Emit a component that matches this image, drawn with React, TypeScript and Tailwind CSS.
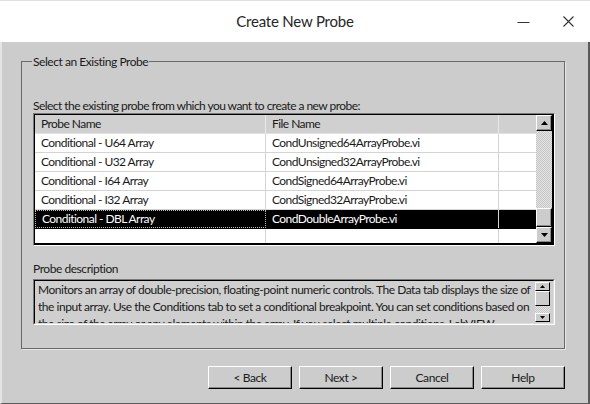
import React from "react";

const font = { fontFamily: "Lato, 'Noto Sans', sans-serif" };

function UpArrow({ small = false }: { small?: boolean }) {
  return small ? (
    <svg width="5" height="3" viewBox="0 0 5 3"><path d="M2.5 0 L5 3 L0 3 Z" fill="#000" /></svg>
  ) : (
    <svg width="7" height="4" viewBox="0 0 7 4"><path d="M3.5 0 L7 4 L0 4 Z" fill="#000" /></svg>
  );
}
function DownArrow({ small = false }: { small?: boolean }) {
  return small ? (
    <svg width="5" height="3" viewBox="0 0 5 3"><path d="M0 0 L5 0 L2.5 3 Z" fill="#000" /></svg>
  ) : (
    <svg width="7" height="4" viewBox="0 0 7 4"><path d="M0 0 L7 0 L3.5 4 Z" fill="#000" /></svg>
  );
}

const rows = [
  ["Conditional - U64 Array", "CondUnsigned64ArrayProbe.vi"],
  ["Conditional - U32 Array", "CondUnsigned32ArrayProbe.vi"],
  ["Conditional - I64 Array", "CondSigned64ArrayProbe.vi"],
  ["Conditional - I32 Array", "CondSigned32ArrayProbe.vi"],
  ["Conditional - DBL Array", "CondDoubleArrayProbe.vi"],
];

function Btn({ label }: { label: string }) {
  return (
    <div className="w-[84px] h-[23px] flex items-center justify-center bg-[#cccccc] border-t border-l border-white border-r border-b border-r-black border-b-black shadow-[inset_-1px_-1px_0_#8a8a8a] text-[12px] tracking-[-0.4px] text-[#1a1a1a]">
      {label}
    </div>
  );
}

export default function App() {
  return (
    <div className="w-[590px] h-[404px] flex flex-col bg-white text-black overflow-hidden" style={font}>
      {/* Title bar */}
      <div className="relative h-[42px] shrink-0 bg-white border-t border-[#e0e0e0] flex items-center justify-center">
        <span className="text-[15px] tracking-[-0.2px] text-[#262626]">Create New Probe</span>
        <div className="absolute right-[15px] top-[14px] flex items-center gap-[32px]">
          <svg width="13" height="13" viewBox="0 0 13 13">
            <path d="M0.5 7.5 H12.5" stroke="#333" strokeWidth="1" />
          </svg>
          <svg width="13" height="13" viewBox="0 0 13 13">
            <path d="M1.5 1.5 L11.5 11.5 M11.5 1.5 L1.5 11.5" stroke="#333" strokeWidth="1.1" />
          </svg>
        </div>
      </div>

      {/* Body */}
      <div className="flex-1 bg-[#cccccc] border-l-2 border-[#e4e4e4] border-r-2 border-r-[#5a5a5a] border-b border-b-[#5a5a5a] flex flex-col">
        {/* Group box */}
        <div className="relative mt-[19px] ml-[19px] w-[544px] h-[288px] border border-[#6a6a6a] shadow-[1px_1px_0_#e8e8e8] pt-[37px] pl-[11px] pr-[8px] flex flex-col">
          <span className="absolute left-[10px] -top-[7px] px-[1px] bg-[#cccccc] text-[12px] leading-[14px] tracking-[-0.45px] text-[#1a1a1a]">
            Select an Existing Probe
          </span>

          <div className="text-[12px] leading-[14px] tracking-[-0.55px] text-[#1a1a1a] whitespace-nowrap">
            Select the existing probe from which you want to create a new probe:
          </div>

          {/* Table */}
          <div className="w-[522px] h-[133px] border-t border-l border-[#7a7a7a] border-r border-b border-r-white border-b-white">
            <div className="w-full h-full border-2 border-black border-t border-l flex">
              <div className="flex-1 flex flex-col bg-white overflow-hidden">
                {/* header */}
                <div className="h-[19px] shrink-0 flex bg-[#d0d0d0] border-b border-[#e2e2e2] text-[12px] tracking-[-0.55px] text-[#1a1a1a]">
                  <div className="w-[231px] pl-[6px] flex items-center border-r border-[#e8e8e8]">Probe Name</div>
                  <div className="w-[233px] pl-[6px] flex items-center border-r border-[#e8e8e8]">File Name</div>
                  <div className="flex-1" />
                </div>
                {rows.map(([a, b], i) => {
                  const sel = i === 4;
                  return (
                    <div
                      key={a}
                      className={`h-[19px] shrink-0 flex border-b text-[12px] tracking-[-0.55px] ${
                        sel ? "bg-black text-white border-black" : "bg-white text-[#1a1a1a] border-[#d4d4d4]"
                      }`}
                    >
                      <div
                        className={`w-[231px] pl-[6px] flex items-center border-r ${
                          sel ? "border border-dotted border-[#bbbbbb] pl-[5px]" : "border-[#d4d4d4]"
                        }`}
                      >
                        {a}
                      </div>
                      <div className="w-[233px] pl-[6px] flex items-center border-r border-[#d4d4d4]">{b}</div>
                      <div className="flex-1" />
                    </div>
                  );
                })}
                <div className="flex-1 flex bg-white">
                  <div className="w-[231px] border-r border-[#d4d4d4]" />
                  <div className="w-[233px] border-r border-[#d4d4d4]" />
                  <div className="flex-1" />
                </div>
              </div>
              {/* Scrollbar */}
              <div className="w-[16px] flex flex-col">
                <div className="h-[16px] shrink-0 flex items-center justify-center bg-[#cccccc] border-t border-l border-white border-r border-b border-r-black border-b-black shadow-[inset_-1px_-1px_0_#8a8a8a]">
                  <UpArrow />
                </div>
                <div className="flex-1 bg-[repeating-conic-gradient(#c4c4c4_0%_25%,#e6e6e6_0%_50%)] bg-[length:2px_2px]" />
                <div className="h-[19px] shrink-0 bg-[#cccccc] border-t border-l border-white border-r border-b border-r-black border-b-black shadow-[inset_-1px_-1px_0_#8a8a8a]" />
                <div className="h-[16px] shrink-0 flex items-center justify-center bg-[#cccccc] border-t border-l border-white border-r border-b border-r-black border-b-black shadow-[inset_-1px_-1px_0_#8a8a8a]">
                  <DownArrow />
                </div>
              </div>
            </div>
          </div>

          <div className="mt-[16px] text-[12px] leading-[14px] tracking-[-0.45px] text-[#1a1a1a]">Probe description</div>

          {/* Description box */}
          <div className="mt-[3px] w-[522px] h-[46px] border-t border-l border-[#7a7a7a] border-r border-b border-r-white border-b-white">
            <div className="w-full h-full border-t border-l border-black border-r border-b border-r-[#dedede] border-b-[#dedede] flex bg-[#cfcfcf]">
              <div className="flex-1 pl-[3px] overflow-hidden text-[12px] leading-[17px] tracking-[-0.47px] text-[#1a1a1a] whitespace-nowrap">
                <div>Monitors an array of double-precision, floating-point numeric controls. The Data tab displays the size of</div>
                <div>the input array. Use the Conditions tab to set a conditional breakpoint. You can set conditions based on</div>
                <div>the size of the array or any elements within the array. If you select multiple conditions, LabVIEW</div>
              </div>
              <div className="w-[15px] my-[1px] mr-[3px] flex flex-col">
                <div className="h-[9px] shrink-0 flex items-center justify-center bg-[#cccccc] border-t border-l border-white border-r border-b border-r-black border-b-black">
                  <UpArrow small />
                </div>
                <div className="h-[15px] shrink-0 bg-[#cccccc] border-t border-l border-white border-r border-b border-r-black border-b-black" />
                <div className="flex-1 bg-[repeating-conic-gradient(#c4c4c4_0%_25%,#e6e6e6_0%_50%)] bg-[length:2px_2px]" />
                <div className="h-[9px] shrink-0 flex items-center justify-center bg-[#cccccc] border-t border-l border-white border-r border-b border-r-black border-b-black">
                  <DownArrow small />
                </div>
              </div>
            </div>
          </div>
        </div>

        {/* Buttons */}
        <div className="mt-[17px] ml-[206px] flex gap-[7px]">
          <Btn label="< Back" />
          <Btn label="Next >" />
          <Btn label="Cancel" />
          <Btn label="Help" />
        </div>
      </div>
    </div>
  );
}
